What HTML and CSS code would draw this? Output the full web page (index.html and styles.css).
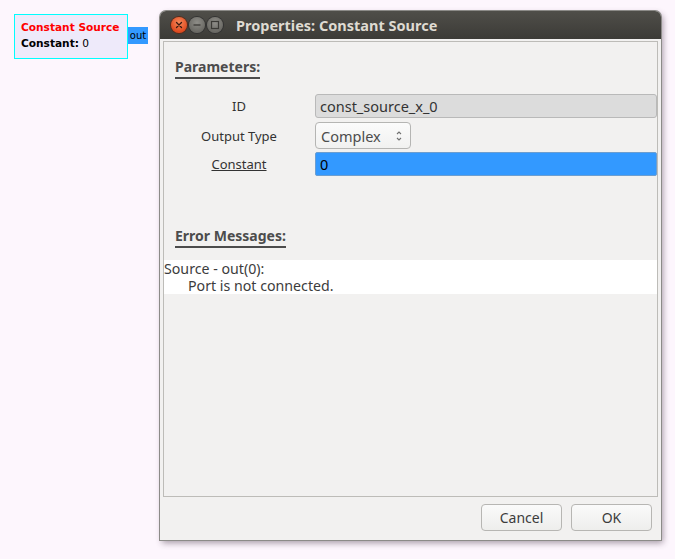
FILE: index.html
```html
<!DOCTYPE html>
<html>
<head>
<meta charset="utf-8">
<link rel="stylesheet" href="styles.css">
</head>
<body>
<div class="canvas">
  <div class="block">
    <div class="block-title">Constant Source</div>
    <div class="block-param"><b>Constant:</b> 0</div>
    <div class="port">out</div>
  </div>

  <div class="window">
    <div class="titlebar">
      <div class="wbtns">
        <span class="wb close"><svg width="16" height="16" viewBox="0 0 16 16"><path d="M5.5 5.5l5 5M10.5 5.5l-5 5" stroke="#3a1a10" stroke-width="1.3" stroke-linecap="round"/></svg></span>
        <span class="wb gray"><svg width="16" height="16" viewBox="0 0 16 16"><path d="M4.5 8h7" stroke="#3b3a36" stroke-width="1.3"/></svg></span>
        <span class="wb gray"><svg width="16" height="16" viewBox="0 0 16 16"><rect x="4.5" y="4.5" width="7" height="7" fill="none" stroke="#3b3a36" stroke-width="1.2"/></svg></span>
      </div>
      <div class="title">Properties: Constant Source</div>
    </div>
    <div class="body">
      <div class="frame">
        <div class="section-label">Parameters:</div>
        <div class="params">
          <div class="row">
            <div class="plabel">ID</div>
            <div class="entry disabled">const_source_x_0</div>
          </div>
          <div class="row combo-row">
            <div class="plabel">Output Type</div>
            <div class="combo">Complex
              <svg class="spin" width="8" height="14" viewBox="0 0 8 14"><path d="M2 5L4 3l2 2M2 9l2 2 2-2" fill="none" stroke="#707070" stroke-width="1.1"/></svg>
            </div>
          </div>
          <div class="row">
            <div class="plabel"><u>Constant</u></div>
            <div class="entry selected">0</div>
          </div>
        </div>
        <div class="section-label err">Error Messages:</div>
        <div class="errors">
          <div>Source - out(0):</div>
          <div class="indent">Port is not connected.</div>
        </div>
      </div>
      <div class="actions">
        <div class="btn">Cancel</div>
        <div class="btn">OK</div>
      </div>
    </div>
  </div>
</div>
</body>
</html>
```
FILE: styles.css
```css
html, body {
  margin: 0;
  padding: 0;
  background: #fdf6fd;
  font-family: "Noto Sans", "DejaVu Sans", sans-serif;
}
.canvas {
  position: relative;
  width: 675px;
  height: 559px;
}
.block {
  position: absolute;
  left: 14px;
  top: 14px;
  width: 112px;
  height: 43px;
  border: 1px solid #00ffff;
  background: #eeeafa;
  font-family: "DejaVu Sans", sans-serif;
  font-size: 10.6px;
}
.block-title {
  color: #ff0000;
  font-weight: bold;
  margin: 5px 0 0 6px;
  line-height: 14px;
}
.block-param {
  margin: 2px 0 0 6px;
  line-height: 14px;
  color: #000;
}
.port {
  position: absolute;
  left: 113px;
  top: 12px;
  width: 20px;
  height: 17px;
  background: #3399ff;
  color: #000;
  font-size: 10px;
  line-height: 17px;
  text-align: center;
}
.window {
  position: absolute;
  left: 160px;
  top: 11px;
  width: 501px;
  height: 529px;
  display: flex;
  flex-direction: column;
  background: #f2f1f0;
  border-radius: 6px 6px 0 0;
  box-shadow: 0 0 0 1px #8c8b88, 2px 3px 6px rgba(60, 40, 60, 0.45);
}
.titlebar {
  height: 28px;
  flex: none;
  display: flex;
  align-items: center;
  background: linear-gradient(#4f4e49, #3c3b37);
  border-radius: 6px 6px 0 0;
  padding-left: 11px;
}
.wbtns {
  display: flex;
  gap: 2px;
}
.wb {
  width: 16px;
  height: 16px;
  border-radius: 50%;
  display: flex;
}
.wb.close {
  background: radial-gradient(circle at 50% 35%, #f58a5c, #df4a1f 70%);
  box-shadow: 0 0 0 1px #5a2a18;
}
.wb.gray {
  background: radial-gradient(circle at 50% 35%, #8e8d88, #6a6964 70%);
  box-shadow: 0 0 0 1px #333;
}
.title {
  margin-left: 13px;
  color: #dfdbd2;
  font-weight: bold;
  font-size: 14.5px;
}
.body {
  flex: 1;
  display: flex;
  flex-direction: column;
  padding: 2px 3px 0 3px;
}
.frame {
  height: 456px;
  flex: none;
  border: 1px solid #bdbcb8;
  box-sizing: border-box;
  font-size: 13px;
  color: #3c3c3c;
}
.section-label {
  display: inline-block;
  margin: 16px 0 0 11px;
  font-weight: bold;
  color: #4c4c4c;
  font-size: 14px;
  line-height: 18px;
  border-bottom: 2px solid #4c4c4c;
  padding-bottom: 1px;
}
.params {
  margin-top: 15px;
  display: flex;
  flex-direction: column;
}
.row {
  display: flex;
  align-items: center;
  height: 24px;
}
.row.combo-row {
  height: 27px;
  margin: 4px 0 3px 0;
}
.plabel {
  width: 150px;
  text-align: center;
  color: #333;
}
.entry {
  margin-left: 1px;
  width: 342px;
  height: 24px;
  box-sizing: border-box;
  border-radius: 3px;
  padding-left: 4px;
  line-height: 22px;
  color: #000;
  font-size: 14.5px;
}
.entry.disabled {
  background: #dcdcdc;
  border: 1px solid #b9b9b9;
  color: #333;
}
.entry.selected {
  background: #3399ff;
  border: 1px solid #6c9ed0;
  border-radius: 2px;
}
.combo {
  margin-left: 1px;
  width: 96px;
  height: 27px;
  box-sizing: border-box;
  border: 1px solid #b5b5b3;
  border-radius: 4px;
  background: linear-gradient(#fbfbfb, #f1f1f0);
  display: flex;
  align-items: center;
  padding-left: 5px;
  color: #4c4c4c;
  font-size: 14.5px;
}
.spin {
  margin-left: 14px;
}
.err {
  margin-top: 51px;
}
.errors {
  margin-top: 12px;
  background: #ffffff;
  padding: 0;
  font-size: 14.2px;
  line-height: 17px;
  color: #3c3c3c;
}
.indent {
  padding-left: 24px;
}
.actions {
  display: flex;
  justify-content: flex-end;
  gap: 9px;
  padding: 7px 6px 0 0;
}
.btn {
  width: 81px;
  height: 27px;
  box-sizing: border-box;
  border: 1px solid #b7b6b3;
  border-radius: 4px;
  background: linear-gradient(#fafafa, #eeeeec);
  text-align: center;
  line-height: 25px;
  font-size: 14px;
  color: #3c3c3c;
}
```
